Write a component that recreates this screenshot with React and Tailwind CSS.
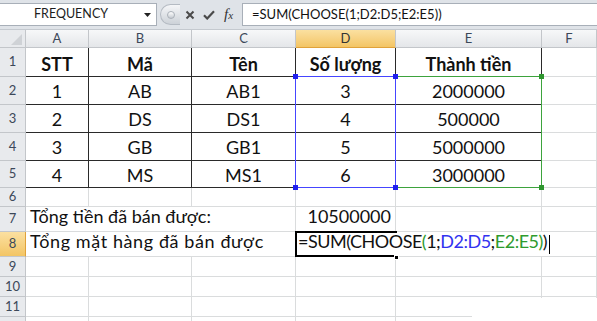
import React from "react";

const table = [
  ["STT", "Mã", "Tên", "Số lượng", "Thành tiền"],
  ["1", "AB", "AB1", "3", "2000000"],
  ["2", "DS", "DS1", "4", "500000"],
  ["3", "GB", "GB1", "5", "5000000"],
  ["4", "MS", "MS1", "6", "3000000"],
];

const headCell =
  "flex items-center justify-center border-r border-b border-[#c3c6ca] text-[13px] text-[#3c4859]";
const grid = "border-r border-b border-[#dadcdd]";
const tbl = "flex items-center justify-center border-r border-b border-[#2a2a2a] text-[18px]";

function FormulaBar() {
  return (
    <div className="h-[30px] bg-[#dfe3e8] pt-[3px] border-b border-[#c4c9cf]">
      <div className="flex h-[23px]">
        <div className="w-[157px] bg-white border border-l-0 border-[#a8afb8] flex items-center justify-between pl-[34px] pr-[5px]">
          <span className="text-[12.5px] text-[#1d1d1d]">FREQUENCY</span>
          <svg width="7" height="4" viewBox="0 0 7 4">
            <path d="M0 0h7L3.5 4z" fill="#222" />
          </svg>
        </div>
        <div className="w-[85px] flex items-center">
          <div className="ml-[3px] w-[20px] h-[21px] rounded-l-full bg-gradient-to-b from-[#f5f6f8] to-[#cdd2d8] border border-r-0 border-[#b5bbc3] flex items-center justify-center">
            <div className="w-[8px] h-[8px] rounded-full bg-gradient-to-b from-white to-[#c6cbd1] border border-[#aab0b8]" />
          </div>
          <svg className="ml-[5px]" width="10" height="10" viewBox="0 0 10 10">
            <path d="M1.5 1.5l7 7M8.5 1.5l-7 7" stroke="#4a4a4a" strokeWidth="2" />
          </svg>
          <svg className="ml-[8px]" width="12" height="10" viewBox="0 0 12 10">
            <path d="M1 5.2l3.2 3.3L11 1.2" stroke="#4a4a4a" strokeWidth="2.2" fill="none" />
          </svg>
          <span className="ml-[9px] font-['Liberation_Serif',serif] italic text-[15px] leading-none text-[#333]">
            f<span className="text-[11px]">x</span>
          </span>
        </div>
        <div className="flex-1 bg-white border border-r-0 border-[#a8afb8] flex items-center pl-[9px] text-[13px] text-[#111]">
          =SUM(CHOOSE(1;D2:D5;E2:E5))
        </div>
      </div>
    </div>
  );
}

function RowHead({ n, active }) {
  return (
    <div
      className={`${headCell} ${
        active
          ? "bg-gradient-to-b from-[#fbe0a0] to-[#f3c564] border-r-[#e0a23a]"
          : "bg-[#e8eaed]"
      }`}
    >
      {n}
    </div>
  );
}

export default function App() {
  return (
    <div className="w-[597px] h-[321px] overflow-hidden bg-white font-['Lato',sans-serif] text-[#111]">
      <FormulaBar />
      <div className="relative grid grid-cols-[26px_63px_103px_104px_100px_146px_55px] grid-rows-[18px_29px_28px_28px_28px_27px_19px_25px_25px_20px_20px_20px_20px]">
        {/* header row */}
        <div className={`${headCell} bg-[#e8eaed] justify-end items-end pr-[3px] pb-[2px]`}>
          <svg width="11" height="11" viewBox="0 0 11 11">
            <path d="M11 0v11H0z" fill="#cfd2d6" />
          </svg>
        </div>
        {["A", "B", "C", "D", "E", "F"].map((c) => (
          <div
            key={c}
            className={`${headCell} ${
              c === "D"
                ? "bg-gradient-to-b from-[#fbe0a0] to-[#f3c564] border-b-[#e0a23a] text-[#333]"
                : "bg-gradient-to-b from-[#f7f8f9] to-[#e4e6e9]"
            }`}
          >
            {c}
          </div>
        ))}

        {/* rows 1-5 */}
        {table.map((row, i) => (
          <React.Fragment key={i}>
            <RowHead n={i + 1} />
            {row.map((v, j) => (
              <div key={j} className={`${tbl} ${i === 0 ? "font-bold pt-[4px]" : "pt-[2px]"}`}>
                {v}
              </div>
            ))}
            <div className={grid} />
          </React.Fragment>
        ))}

        {/* row 6 */}
        <RowHead n={6} />
        {[0, 1, 2, 3, 4, 5].map((k) => (
          <div key={k} className={grid} />
        ))}

        {/* row 7 */}
        <RowHead n={7} />
        <div className={`col-span-3 ${grid} flex items-end pl-[4px] pb-[1px] text-[18px] whitespace-nowrap`}>
          Tổng tiền đã bán được:
        </div>
        <div className={`${grid} flex items-end justify-end pr-[4px] pb-[1px] text-[18px]`}>10500000</div>
        <div className={grid} />
        <div className={grid} />

        {/* row 8 */}
        <RowHead n={8} active />
        <div className={`col-span-3 ${grid} flex items-end pl-[4px] pb-[1px] text-[18px] tracking-[0.6px] whitespace-nowrap`}>
          Tổng mặt hàng đã bán được
        </div>
        <div className={`col-span-3 relative ${grid} flex items-end pl-[2px] pb-[1px] text-[18px] tracking-[-0.5px] whitespace-nowrap`}>
          <span>=SUM(CHOOSE</span>
          <span className="text-[#2e9b2e]">(</span>
          <span>1;</span>
          <span className="text-[#3232f0]">D2:D5</span>
          <span>;</span>
          <span className="text-[#2e9b2e]">E2:E5</span>
          <span className="text-[#2e9b2e]">)</span>
          <span>)</span>
          <span className="ml-[2px] mb-[1px] w-px h-[19px] bg-black" />
          <div className="absolute -left-px -top-px w-[102px] h-[26px] border-2 border-r-0 border-black" />
          <div className="absolute left-[98px] top-[23px] w-[5px] h-[5px] bg-black border border-white" />
        </div>

        {/* rows 9-12 */}
        {[9, 10, 11, 12].map((n) => (
          <React.Fragment key={n}>
            <RowHead n={n < 12 ? n : ""} />
            {[0, 1, 2, 3, 4, 5].map((k) => (
              <div key={k} className={grid} />
            ))}
          </React.Fragment>
        ))}

        {/* range highlights */}
        <div className="absolute col-start-6 col-end-7 row-start-3 row-end-7 -top-px -left-px right-0 bottom-0 border border-[#3da33d]">
          <div className="absolute -right-[3px] -top-[3px] w-[5px] h-[5px] bg-[#2f962f]" />
          <div className="absolute -right-[3px] -bottom-[3px] w-[5px] h-[5px] bg-[#2f962f]" />
        </div>
        <div className="absolute col-start-5 col-end-6 row-start-3 row-end-7 -top-px -left-px right-0 bottom-0 border border-[#4545ff]">
          <div className="absolute -left-[3px] -top-[3px] w-[5px] h-[5px] bg-[#1f1fee]" />
          <div className="absolute -right-[3px] -top-[3px] w-[5px] h-[5px] bg-[#1f1fee]" />
          <div className="absolute -left-[3px] -bottom-[3px] w-[5px] h-[5px] bg-[#1f1fee]" />
          <div className="absolute -right-[3px] -bottom-[3px] w-[5px] h-[5px] bg-[#1f1fee]" />
        </div>

        {/* blank area at bottom right */}
        <div className="absolute col-start-6 col-end-8 row-start-12 row-end-14 left-[76px] top-px right-0 bottom-0 bg-white" />
      </div>
    </div>
  );
}
